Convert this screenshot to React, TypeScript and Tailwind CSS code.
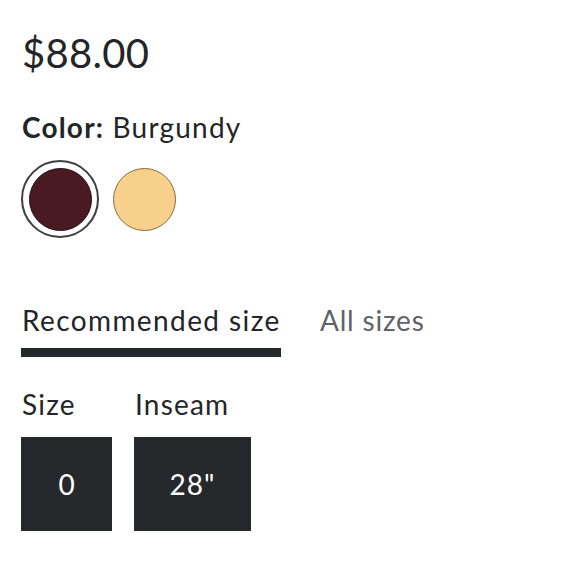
import { useState } from "react";

const swatches = [
  { name: "Burgundy", fill: "bg-[#4a1a23]", edge: "border-[#2a0f15]" },
  { name: "Honey", fill: "bg-[#f7d08b]", edge: "border-[#8a6c3c]" },
];

export default function App() {
  const [color, setColor] = useState("Burgundy");
  const [tab, setTab] = useState<"recommended" | "all">("recommended");

  return (
    <div className="h-[580px] w-[580px] bg-white pl-[22px] pt-[29px] font-['Lato',sans-serif] text-[#232529]">
      <p className="text-[40px] leading-[48px] tracking-[0.3px]">$88.00</p>

      <p className="mt-[33px] text-[28px] leading-[34px] tracking-[1.2px]">
        <span className="font-bold">Color:</span> {color}
      </p>

      <div className="mt-[16px] flex items-center gap-[14px] -ml-px">
        {swatches.map((s) =>
          s.name === color ? (
            <button
              key={s.name}
              onClick={() => setColor(s.name)}
              className="flex h-[78px] w-[78px] items-center justify-center rounded-full border-2 border-[#3e3f42]"
            >
              <span className={`block h-[63px] w-[63px] rounded-full border ${s.edge} ${s.fill}`} />
            </button>
          ) : (
            <button
              key={s.name}
              onClick={() => setColor(s.name)}
              className={`block h-[63px] w-[63px] rounded-full border-[1.5px] ${s.edge} ${s.fill}`}
            />
          )
        )}
      </div>

      <div className="mt-[65px] flex gap-[38px]">
        <button onClick={() => setTab("recommended")} className="flex w-[260px] flex-col items-start">
          <span className={`text-[28px] leading-[34px] tracking-[1.4px] ${tab === "recommended" ? "text-[#232529]" : "text-[#5f6268]"}`}>
            Recommended size
          </span>
          <span className={`mt-[11px] block h-[9px] w-[260px] -ml-px ${tab === "recommended" ? "bg-[#26282c]" : "bg-transparent"}`} />
        </button>
        <button onClick={() => setTab("all")} className="flex flex-col items-start">
          <span className={`text-[28px] leading-[34px] tracking-[0.8px] ${tab === "all" ? "text-[#232529]" : "text-[#5f6268]"}`}>
            All sizes
          </span>
        </button>
      </div>

      <div className="mt-[30px] flex gap-[22px] -ml-px">
        <div className="flex flex-col">
          <span className="pl-px text-[28px] leading-[34px] tracking-[1.2px]">Size</span>
          <div className="mt-[16px] flex h-[94px] w-[91px] items-center justify-center bg-[#26282c] text-[28px] text-white">
            0
          </div>
        </div>
        <div className="flex flex-col">
          <span className="pl-px text-[28px] leading-[34px] tracking-[1.2px]">Inseam</span>
          <div className="mt-[16px] flex h-[94px] w-[117px] items-center justify-center bg-[#26282c] text-[28px] tracking-[1px] text-white">
            28"
          </div>
        </div>
      </div>
    </div>
  );
}
